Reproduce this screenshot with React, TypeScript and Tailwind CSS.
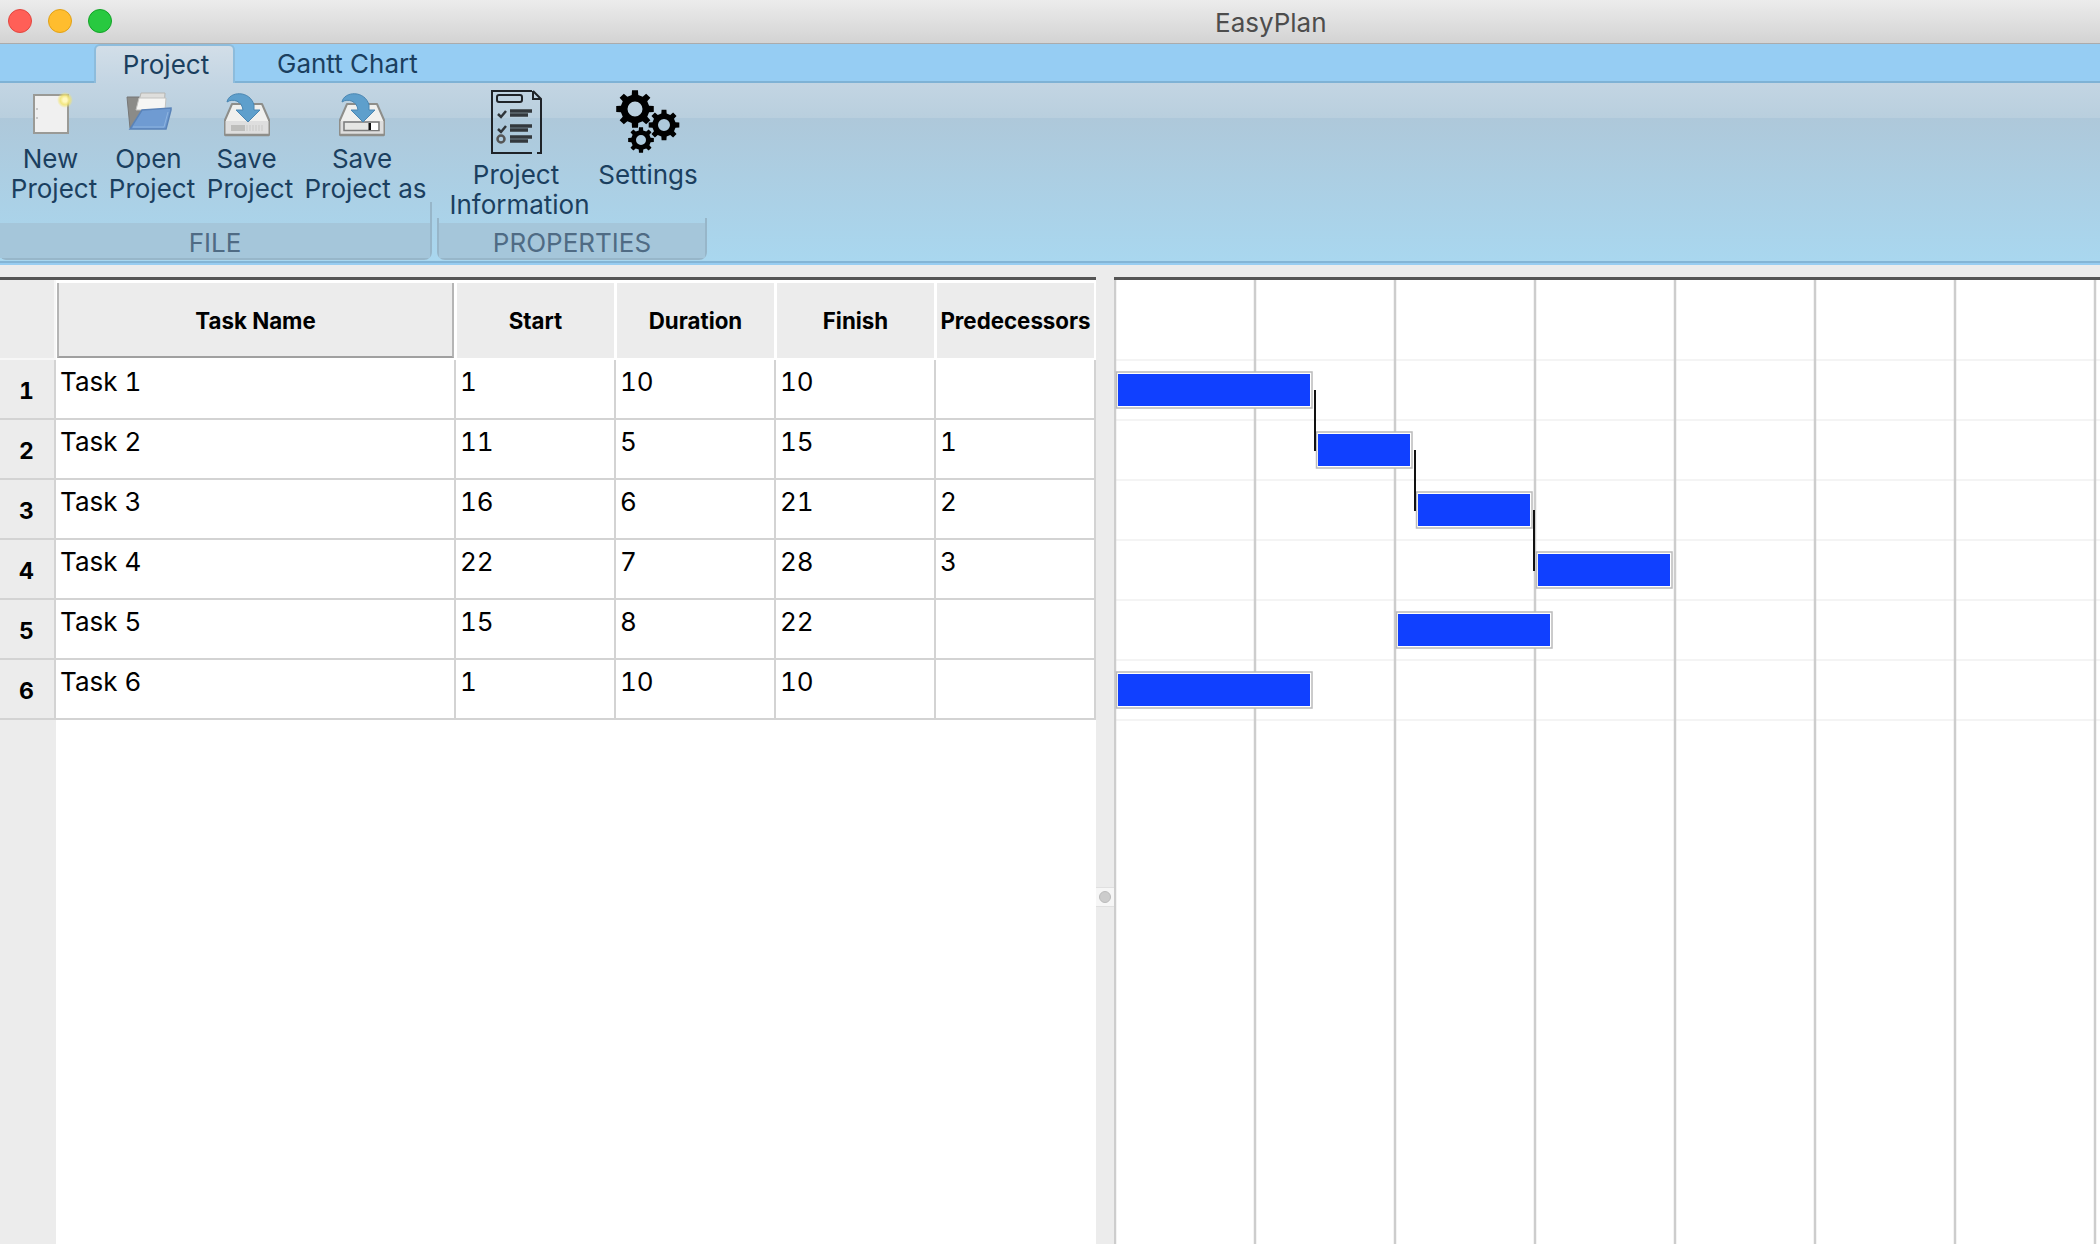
const rows = [
  { n: 1, name: 'Task 1', start: '1', dur: '10', fin: '10', pre: '' },
  { n: 2, name: 'Task 2', start: '11', dur: '5', fin: '15', pre: '1' },
  { n: 3, name: 'Task 3', start: '16', dur: '6', fin: '21', pre: '2' },
  { n: 4, name: 'Task 4', start: '22', dur: '7', fin: '28', pre: '3' },
  { n: 5, name: 'Task 5', start: '15', dur: '8', fin: '22', pre: '' },
  { n: 6, name: 'Task 6', start: '1', dur: '10', fin: '10', pre: '' },
]

// x positions are relative to the chart's left edge (page x 1114), y to its top (page y 280)
const bars = [
  { x: 2, w: 197, y: 91 },
  { x: 202, w: 97, y: 151 },
  { x: 302, w: 117, y: 211 },
  { x: 422, w: 137, y: 271 },
  { x: 282, w: 157, y: 331 },
  { x: 2, w: 197, y: 391 },
]
const links = [
  { x: 201, y1: 110, y2: 171 },
  { x: 301, y1: 170, y2: 231 },
  { x: 420, y1: 230, y2: 291 },
]

function gearPath(cx: number, cy: number, r: number, hole: number, teeth = 8) {
  const inner = r * 0.76
  const pts: string[] = []
  const step = (Math.PI * 2) / teeth
  for (let i = 0; i < teeth; i++) {
    const a = i * step - Math.PI / 2
    const t = step * 0.2
    const b = step * 0.29
    const p = [
      [inner, a - b],
      [r, a - t],
      [r, a + t],
      [inner, a + b],
    ]
    p.forEach(([rad, an]) => {
      pts.push(`${(cx + rad * Math.cos(an)).toFixed(2)} ${(cy + rad * Math.sin(an)).toFixed(2)}`)
    })
  }
  return (
    `M${pts.join('L')}Z` +
    `M${cx - hole} ${cy}a${hole} ${hole} 0 1 0 ${hole * 2} 0a${hole} ${hole} 0 1 0 ${-hole * 2} 0Z`
  )
}

const NewIcon = (
  <svg width="48" height="48" viewBox="0 0 48 48">
    <defs>
      <radialGradient id="glow">
        <stop offset="0.25" stopColor="#fff8c0" />
        <stop offset="0.6" stopColor="#f3e56f" stopOpacity="0.85" />
        <stop offset="1" stopColor="#f3e56f" stopOpacity="0" />
      </radialGradient>
    </defs>
    <rect x="7" y="5" width="34" height="38" fill="#f0f0f0" stroke="#9a9a96" strokeWidth="2" />
    <circle cx="10" cy="19" r="1" fill="#bbb" />
    <circle cx="10" cy="28" r="1" fill="#bbb" />
    <circle cx="38" cy="10" r="8" fill="url(#glow)" />
  </svg>
)

const OpenIcon = (
  <svg width="48" height="48" viewBox="0 0 48 48">
    <path d="M2 7h12l6 2v29H5z" fill="#8b8b88" stroke="#777" strokeWidth="1" />
    <path d="M16 3h24l-1 16H12z" fill="#dededc" stroke="#b5b5b2" strokeWidth="1" />
    <path d="M14 8h27l-1 12H11z" fill="#f6f6f4" stroke="#c2c2c0" strokeWidth="1" />
    <path d="M17 20l29-2v2l-5 19H5z" fill="#6f9bd2" stroke="#5a83b8" strokeWidth="1.5" />
    <path d="M8 37h31l4-15" fill="none" stroke="#8eb4e0" strokeWidth="1" />
  </svg>
)

function SaveIcon({ as }: { as?: boolean }) {
  return (
    <svg width="48" height="48" viewBox="0 0 48 48">
      <path d="M9 14h30l7 16v15H2V30z" fill="#f0f0ee" stroke="#8e8e8a" strokeWidth="2" strokeLinejoin="round" />
      <rect x="2.5" y="31" width="43" height="14" fill="#dedede" />
      <path d="M2 45h44" stroke="#8e8e8a" strokeWidth="2.5" />
      {as ? (
        <g>
          <rect x="6" y="32" width="35" height="8.5" fill="#e6e6e4" stroke="#7a7a7a" strokeWidth="1.5" />
          <rect x="30.5" y="33" width="2.5" height="7" fill="#111" />
          <rect x="33" y="33" width="7" height="7" fill="#fff" />
        </g>
      ) : (
        <g>
          <rect x="8" y="35" width="14" height="6" fill="#bdbdbb" />
          <path d="M24 35v6M27 35v6M30 35v6M33 35v6M36 35v6M39 35v6" stroke="#c8c8c6" strokeWidth="1" />
        </g>
      )}
      <path
        d="M4 12C6 1 27 0 31 15v5h6L25 32 13 20h7C19 11 10 8 4 12z"
        fill="#5e9fcc"
        stroke="#4a86b2"
        strokeWidth="1"
      />
    </svg>
  )
}

const InfoIcon = (
  <svg width="52" height="64" viewBox="0 0 52 64" fill="none" stroke="#1f2328">
    <path d="M42 1H2v62h40M47 63h4V9L43 1M43 1v8h8" strokeWidth="2" />
    <rect x="7" y="5" width="25" height="7" rx="2" strokeWidth="2" />
    <path d="M8 24l3 3 5-6M8 39l3 3 5-6" strokeWidth="2.5" stroke="#30353a" />
    <circle cx="11" cy="49" r="3.5" strokeWidth="2.5" stroke="#555" />
    <path d="M20 21h22M20 25h18M20 36h22M20 40h18M20 47h22M20 51h18" strokeWidth="3.5" stroke="#33383d" />
  </svg>
)

const GearsIcon = (
  <svg width="70" height="64" viewBox="0 0 70 64">
    <path fillRule="evenodd" d={gearPath(22, 19, 19, 7.5)} fill="#000" />
    <path fillRule="evenodd" d={gearPath(51, 35, 15.5, 6)} fill="#000" />
    <path fillRule="evenodd" d={gearPath(28, 50, 13, 5)} fill="#000" />
  </svg>
)

const fileButtons = [
  { lines: ['New', 'Project'], icon: NewIcon, w: 'w-[84px]' },
  { lines: ['Open', 'Project'], icon: OpenIcon, w: 'w-[84px]' },
  { lines: ['Save', 'Project'], icon: <SaveIcon />, w: 'w-[84px]' },
  { lines: ['Save', 'Project as'], icon: <SaveIcon as />, w: 'w-[119px]' },
]

function GroupFooter({ label, className }: { label: string; className: string }) {
  return (
    <div className={`flex flex-col justify-end rounded-b-lg border-b-2 border-[#97b6c9] ${className}`}>
      <div className="flex h-[35px] items-center justify-center bg-[#a5c6da] pt-[6px] text-[26px] text-[#4f6b84]">
        {label}
      </div>
    </div>
  )
}

function Ribbon() {
  return (
    <div className="flex h-[179px] bg-[linear-gradient(180deg,#c3d5e3_0%,#b9cfde_19.5%,#aec8da_19.5%,#a9d7ef_100%)] text-[26px] leading-[30px] text-[#1b3f5f]">
      <div className="flex w-[432px] flex-col">
        <div className="flex h-[119px] gap-[14px] pl-3 pt-[7px]">
          {fileButtons.map((b) => (
            <div key={b.lines[1] + b.lines[0]} className={`flex shrink-0 flex-col items-center ${b.w}`}>
              <div className="h-[48px] pr-[7px]">{b.icon}</div>
              <div className="mt-[6px] whitespace-nowrap pr-[7px]">{b.lines[0]}</div>
              <div className="whitespace-nowrap">{b.lines[1]}</div>
            </div>
          ))}
        </div>
        <GroupFooter label="FILE" className="h-[58px] rounded-bl-md border-r-2" />
      </div>
      <div className="ml-[5px] flex w-[270px] flex-col">
        <div className="flex h-[135px] gap-[11px] pl-[14px] pt-[7px]">
          <div className="flex w-[137px] shrink-0 flex-col items-center">
            <div className="h-[64px] pr-[7px]">{InfoIcon}</div>
            <div className="mt-[6px] pr-[7px]">Project</div>
            <div>Information</div>
          </div>
          <div className="flex w-[98px] shrink-0 flex-col items-center">
            <div className="h-[64px]">{GearsIcon}</div>
            <div className="mt-[6px]">Settings</div>
          </div>
        </div>
        <GroupFooter label="PROPERTIES" className="h-[42px] border-x-2" />
      </div>
    </div>
  )
}

function HeaderCell({ label, active }: { label: string; active?: boolean }) {
  return (
    <div className="border-b-2 border-r-2 border-white bg-white pl-px pt-[3px]">
      <div
        className={`flex h-[75px] items-center justify-center whitespace-nowrap bg-[#ececec] text-[22.3px] font-bold text-black ${
          active ? 'border-x-2 border-b-2 border-x-[#b5b5b5] border-b-[#a0a0a0] pt-[2px]' : ''
        }`}
      >
        {label}
      </div>
    </div>
  )
}

function Cell({ value }: { value: string }) {
  return (
    <div className="h-[60px] border-b-2 border-r-2 border-[#d3d3d3] pl-[4px] pt-[7px] text-[26px] leading-[30px] text-black tabular-nums">
      {value}
    </div>
  )
}

function TablePanel() {
  return (
    <div className="flex w-[1096px] flex-col border-t-[3px] border-[#555555] bg-white">
      <div className="grid grid-cols-[56px_400px_160px_160px_160px_160px]">
        <div className="h-[80px] border-b-2 border-r-2 border-[#f7f7f7] bg-[#ececec]" />
        <HeaderCell label="Task Name" active />
        <HeaderCell label="Start" />
        <HeaderCell label="Duration" />
        <HeaderCell label="Finish" />
        <HeaderCell label="Predecessors" />
        {rows.map((r) => (
          <div key={r.n} className="contents">
            <div className="flex h-[60px] items-center border-b-2 border-r-2 border-[#d3d3d3] bg-[#ececec] pl-[19px] pt-[4px] text-[23px] font-bold text-black tabular-nums">
              {r.n}
            </div>
            <Cell value={r.name} />
            <Cell value={r.start} />
            <Cell value={r.dur} />
            <Cell value={r.fin} />
            <Cell value={r.pre} />
          </div>
        ))}
      </div>
      <div className="w-[56px] flex-1 bg-[#ececec]" />
    </div>
  )
}

function GanttChart() {
  const verticals = [1, 141, 281, 421, 561, 701, 841, 981]
  const horizontals = [80, 140, 200, 260, 320, 380, 440]
  return (
    <div className="flex-1 border-t-[3px] border-[#555555] bg-white">
      <svg width="986" height="964" viewBox="0 0 986 964" className="block">
        {horizontals.map((y) => (
          <line key={y} x1="0" x2="986" y1={y} y2={y} stroke="#f1f1f1" strokeWidth="1.5" />
        ))}
        {verticals.map((x) => (
          <line key={x} x1={x} x2={x} y1="0" y2="964" stroke="#cdcdcd" strokeWidth="2.5" />
        ))}
        {bars.map((b) => (
          <g key={b.y}>
            <rect x={b.x + 0.5} y={b.y + 1} width={b.w - 1.5} height="36" fill="#ffffff" stroke="#bbbbbb" strokeWidth="1.5" />
            <rect x={b.x + 2} y={b.y + 3} width={b.w - 5} height="32" fill="#1040ff" />
          </g>
        ))}
        {links.map((l) => (
          <line key={l.x} x1={l.x} x2={l.x} y1={l.y1} y2={l.y2} stroke="#111111" strokeWidth="2" />
        ))}
      </svg>
    </div>
  )
}

export default function App() {
  return (
    <div className="flex h-[1244px] w-[2100px] flex-col overflow-hidden bg-[#ececec] font-[family-name:Inter,sans-serif]">
      {/* Title bar */}
      <div className="flex h-[44px] items-center border-b border-[#ababab] bg-[linear-gradient(180deg,#ececec,#d3d3d3)] pl-2">
        <div className="flex gap-4">
          <div className="h-6 w-6 rounded-full border border-[#e2463f] bg-[#ff5f57]" />
          <div className="h-6 w-6 rounded-full border border-[#e1a116] bg-[#ffbd2e]" />
          <div className="h-6 w-6 rounded-full border border-[#13a327] bg-[#28c940]" />
        </div>
        <div className="ml-[1103px] pt-[3px] text-[26px] text-[#4d4d4d]">EasyPlan</div>
      </div>
      {/* Tabs */}
      <div className="flex h-[39px] border-b-2 border-[#7fb2d5] bg-[#96cdf3] pl-[94px] text-[26px] text-[#1b3f5f]">
        <div className="-mb-[2px] flex h-[39px] w-[141px] items-center justify-center self-end rounded-t-md border-x-2 border-t-2 border-[#8dbcdc] bg-[linear-gradient(180deg,#d2dee8,#c3d5e3)] pl-[3px] pt-[1px]">
          Project
        </div>
        <div className="ml-[42px] flex items-center pt-[3px]">Gantt Chart</div>
      </div>
      <Ribbon />
      <div className="h-[2px] bg-[#84b5d5]" />
      <div className="h-[2px] bg-[#98cdf1]" />
      {/* Main area */}
      <div className="flex flex-1 pt-[12px]">
        <TablePanel />
        <div className="w-[18px] bg-[#ececec]">
          <div className="mt-[610px] flex h-[20px] items-center justify-center border-y border-[#e0e0e0] bg-[#f6f6f6]">
            <div className="h-3 w-3 rounded-full border border-[#bbbbbb] bg-[#cccccc]" />
          </div>
        </div>
        <GanttChart />
      </div>
    </div>
  )
}
